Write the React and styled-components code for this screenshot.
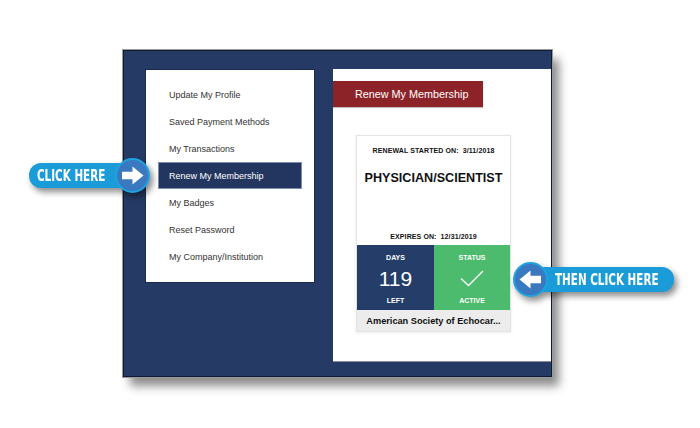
import React from 'react';
import styled, { createGlobalStyle } from 'styled-components';

const GlobalStyle = createGlobalStyle`
	html, body {
		margin: 0;
		padding: 0;
		background: #fff;
		font-family: "Liberation Sans", Arial, sans-serif;
	}
`;

const Page = styled.div`
	position: relative;
	width: 700px;
	height: 428px;
	overflow: hidden;
	background: #fff;
	padding: 50px 0 0 123px;
	box-sizing: border-box;
`;

const Frame = styled.div`
	width: 429px;
	height: 327px;
	box-sizing: border-box;
	background: #253b65;
	border: 1px solid #0f1a33;
	outline: 1px solid #9a9a9a;
	box-shadow: 7px 9px 9px rgba(0,0,0,.45);
	display: flex;
	align-items: flex-start;
	padding: 18px 0 0 21px;
	gap: 18px;
`;

const SideMenu = styled.div`
	width: 170px;
	height: 214px;
	box-sizing: border-box;
	background: #fff;
	border: 1px solid #1a2a4d;
	padding: 11px 12px 0 12px;
	display: flex;
	flex-direction: column;
`;

const MenuItem = styled.div`
	height: 27px;
	box-sizing: border-box;
	display: flex;
	align-items: center;
	padding-left: 10px;
	font-size: 9px;
	color: ${p => p.active ? '#fff' : '#333'};
	background: ${p => p.active ? '#223660' : 'transparent'};
	border: 1px solid ${p => p.active ? '#7d8db0' : 'transparent'};
`;

const Content = styled.div`
	flex: 1;
	height: 293px;
	background: #fff;
	border-bottom: 1px solid #8a8f99;
	padding-top: 12px;
	box-sizing: border-box;
`;

const RenewButton = styled.div`
	width: 150px;
	height: 26px;
	background: #8c2328;
	color: #fff;
	font-size: 10.8px;
	display: flex;
	align-items: center;
	padding-left: 22px;
	box-sizing: border-box;
	box-shadow: 0 1px 1px rgba(0,0,0,.25);
`;

const Card = styled.div`
	width: 155px;
	height: 197px;
	margin: 28px 0 0 23px;
	box-sizing: border-box;
	border: 1px solid #e4e4e4;
	box-shadow: 0 1px 3px rgba(0,0,0,.08);
	display: flex;
	flex-direction: column;
	font-weight: bold;
	color: #111;
`;

const CardTop = styled.div`
	height: 109px;
	display: flex;
	flex-direction: column;
	align-items: center;
	padding-top: 11px;
	box-sizing: border-box;
`;

const SmallLine = styled.div`
	font-size: 7px;
	letter-spacing: .1px;
	white-space: pre;
	margin-top: ${p => p.mt || 0}px;
`;

const Level = styled.div`
	font-size: 12.6px;
	margin-top: 17px;
`;

const StatGrid = styled.div`
	display: grid;
	grid-template-columns: 77px 1fr;
	height: 65px;
`;

const Stat = styled.div`
	background: ${p => p.bg};
	color: #fff;
	display: flex;
	flex-direction: column;
	align-items: center;
	padding-top: 9px;
	box-sizing: border-box;
`;

const StatLabel = styled.div`
	font-size: 7px;
	height: 9px;
`;

const StatValue = styled.div`
	font-size: 21px;
	font-weight: normal;
	height: 29px;
	display: flex;
	align-items: center;
	justify-content: center;
	margin: 1px 0 4px;
`;

const CardFooter = styled.div`
	flex: 1;
	background: #ececec;
	font-size: 9.2px;
	display: flex;
	align-items: center;
	justify-content: center;
	white-space: nowrap;
`;

const Callout = styled.div`
	position: absolute;
	left: ${p => p.x}px;
	top: ${p => p.y}px;
	display: flex;
	align-items: center;
	flex-direction: ${p => p.reverse ? 'row-reverse' : 'row'};
	filter: drop-shadow(3px 4px 3px rgba(0,0,0,.45));
`;

const Pill = styled.div`
	width: ${p => p.w}px;
	height: 25px;
	background: #1b9cd8;
	color: #fff;
	display: flex;
	align-items: center;
	box-sizing: border-box;
	border-radius: ${p => p.reverse ? '0 12px 12px 0' : '12px 0 0 12px'};
	padding-left: ${p => p.reverse ? 22 : 8}px;
	margin: ${p => p.reverse ? '0 0 0 -15px' : '0 -15px 0 0'};
	font-family: "DejaVu Sans Condensed", "DejaVu Sans", sans-serif;
	font-stretch: condensed;
	font-weight: bold;
	font-size: 15px;
	white-space: nowrap;
`;

const PillText = styled.span`
	display: inline-block;
	transform: scaleX(.77);
	transform-origin: left center;
`;

const Circle = styled.div`
	position: relative;
	width: 35px;
	height: 35px;
	border-radius: 50%;
	background: #3a78c0;
	border: 2px solid #1fa3df;
	box-sizing: border-box;
	display: flex;
	align-items: center;
	justify-content: center;
`;

function Arrow({ left }) {
	return (
		<svg width="23" height="19" viewBox="0 0 22 18" style={left ? { transform: 'scaleX(-1)' } : null}>
			<path d="M1 5.5H11V0.5L21.5 9L11 17.5V12.5H1Z" fill="#fff" />
		</svg>
	);
}

function Check() {
	return (
		<svg width="24" height="17" viewBox="0 0 24 17">
			<path d="M1 8.5L8.5 15.5L23 1" fill="none" stroke="#fff" strokeWidth="1.4" />
		</svg>
	);
}

const menu = [
	'Update My Profile',
	'Saved Payment Methods',
	'My Transactions',
	'Renew My Membership',
	'My Badges',
	'Reset Password',
	'My Company/Institution'
];

export default function App() {
	return (
		<Page>
			<GlobalStyle />
			<Frame>
				<SideMenu>
					{menu.map(m => (
						<MenuItem key={m} active={m === 'Renew My Membership'}>{m}</MenuItem>
					))}
				</SideMenu>
				<Content>
					<RenewButton>Renew My Membership</RenewButton>
					<Card>
						<CardTop>
							<SmallLine>{'RENEWAL STARTED ON:  3/11/2018'}</SmallLine>
							<Level>PHYSICIAN/SCIENTIST</Level>
							<SmallLine mt={48}>{'EXPIRES ON:  12/31/2019'}</SmallLine>
						</CardTop>
						<StatGrid>
							<Stat bg="#253d69">
								<StatLabel>DAYS</StatLabel>
								<StatValue>119</StatValue>
								<StatLabel>LEFT</StatLabel>
							</Stat>
							<Stat bg="#4cbb6d">
								<StatLabel>STATUS</StatLabel>
								<StatValue><Check /></StatValue>
								<StatLabel>ACTIVE</StatLabel>
							</Stat>
						</StatGrid>
						<CardFooter>American Society of Echocar...</CardFooter>
					</Card>
				</Content>
			</Frame>

			<Callout x={29} y={158}>
				<Pill w={101}><PillText>CLICK HERE</PillText></Pill>
				<Circle><Arrow /></Circle>
			</Callout>
			<Callout x={513} y={262} reverse>
				<Pill reverse w={141}><PillText>THEN CLICK HERE</PillText></Pill>
				<Circle><Arrow left /></Circle>
			</Callout>
		</Page>
	);
}
